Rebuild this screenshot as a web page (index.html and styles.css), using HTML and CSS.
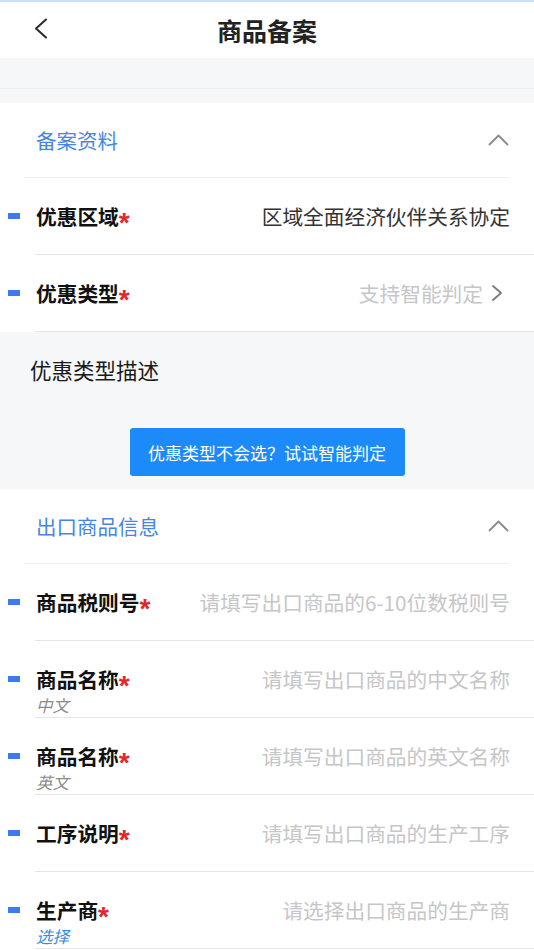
FILE: index.html
```html
<!DOCTYPE html>
<html lang="zh-CN">
<head>
    <meta charset="UTF-8">
    <meta name="viewport" content="width=device-width, initial-scale=1.0">
    <title>商品备案</title>
    <link rel="stylesheet" href="styles.css">
</head>
<body>
    <div class="topline"></div>
    <header class="nav">
        <svg class="back" width="14" height="22" viewBox="0 0 14 22">
            <polyline points="12,1.5 2,10.5 12,19.5" />
        </svg>
        <h1>商品备案</h1>
        <span></span>
    </header>
    <div class="gap">
        <div class="gap-top"></div>
    </div>

    <section class="card">
        <div class="card-head">
            <span>备案资料</span>
            <svg class="fold" width="22" height="12" viewBox="0 0 22 12">
                <polyline points="1.5,10.5 10.5,1.5 19.5,10.5" />
            </svg>
        </div>
        <div class="field">
            <i class="mark"></i>
            <div class="field-body">
                <div class="field-label">
                    <div class="name">优惠区域<b class="req">*</b></div>
                </div>
                <div class="field-value">区域全面经济伙伴关系协定</div>
            </div>
        </div>
        <div class="field">
            <i class="mark"></i>
            <div class="field-body">
                <div class="field-label">
                    <div class="name">优惠类型<b class="req">*</b></div>
                </div>
                <div class="field-value placeholder">支持智能判定</div>
                <svg class="arrow" width="10" height="24" viewBox="0 0 10 24">
                    <polyline points="1,5 9,12 1,19" />
                </svg>
            </div>
        </div>
    </section>

    <section class="desc">
        <div class="desc-title">优惠类型描述</div>
        <button type="button" class="smart-btn">优惠类型不会选？试试智能判定</button>
    </section>

    <section class="card">
        <div class="card-head">
            <span>出口商品信息</span>
            <svg class="fold" width="22" height="12" viewBox="0 0 22 12">
                <polyline points="1.5,10.5 10.5,1.5 19.5,10.5" />
            </svg>
        </div>
        <div class="field">
            <i class="mark"></i>
            <div class="field-body">
                <div class="field-label">
                    <div class="name">商品税则号<b class="req">*</b></div>
                </div>
                <div class="field-value placeholder">请填写出口商品的6-10位数税则号</div>
            </div>
        </div>
        <div class="field">
            <i class="mark"></i>
            <div class="field-body">
                <div class="field-label">
                    <div class="name">商品名称<b class="req">*</b></div>
                    <div class="sub">中文</div>
                </div>
                <div class="field-value placeholder">请填写出口商品的中文名称</div>
            </div>
        </div>
        <div class="field">
            <i class="mark"></i>
            <div class="field-body">
                <div class="field-label">
                    <div class="name">商品名称<b class="req">*</b></div>
                    <div class="sub">英文</div>
                </div>
                <div class="field-value placeholder">请填写出口商品的英文名称</div>
            </div>
        </div>
        <div class="field">
            <i class="mark"></i>
            <div class="field-body">
                <div class="field-label">
                    <div class="name">工序说明<b class="req">*</b></div>
                </div>
                <div class="field-value placeholder">请填写出口商品的生产工序</div>
            </div>
        </div>
        <div class="field">
            <i class="mark"></i>
            <div class="field-body">
                <div class="field-label">
                    <div class="name">生产商<b class="req">*</b></div>
                    <div class="sub link">选择</div>
                </div>
                <div class="field-value placeholder">请选择出口商品的生产商</div>
            </div>
        </div>
    </section>
</body>
</html>
```

FILE: styles.css
```css
body {
    margin: 0;
    width: 534px;
    height: 950px;
    overflow: hidden;
    background-color: #fff;
    font-family: "Noto Sans CJK SC", "Noto Sans", sans-serif;
    color: #1a1a1a;
}

.topline {
    height: 2px;
    background-color: #cbe0f3;
}

.nav {
    display: grid;
    grid-template-columns: 1fr auto 1fr;
    align-items: center;
    height: 56px;
    background-color: #fff;
}

.back {
    margin-left: 34px;
    margin-top: -2px;
}

.back polyline,
.fold polyline,
.arrow polyline {
    fill: none;
    stroke-linecap: round;
    stroke-linejoin: round;
}

.back polyline {
    stroke: #2a2a2a;
    stroke-width: 2;
}

.nav h1 {
    margin: 0;
    font-size: 25px;
    font-weight: 700;
    line-height: 56px;
    color: #222;
}

.gap {
    height: 45px;
    background-color: #f6f7f9;
}

.gap-top {
    height: 30px;
    border-bottom: 1px solid #eceef1;
}

.card {
    background-color: #fff;
}

.card-head {
    display: flex;
    align-items: center;
    justify-content: space-between;
    box-sizing: border-box;
    height: 75px;
    margin: 0 24px;
    padding-left: 12px;
    border-bottom: 1px solid #efeff1;
    font-size: 20.5px;
    color: #4686e2;
}

.card-head span {
    margin-top: -1px;
}

.fold polyline {
    stroke: #8a8a8a;
    stroke-width: 1.8;
}

.field {
    display: flex;
    align-items: flex-start;
}

.mark {
    flex: none;
    width: 12px;
    height: 6px;
    margin: 35px 15px 0 8px;
    background-color: #3b7bef;
}

.field-body {
    flex: 1;
    display: flex;
    align-items: flex-start;
    box-sizing: border-box;
    height: 77px;
    padding: 26px 24px 0 1px;
    border-bottom: 1px solid #e6e6e8;
}

.field-label {
    flex: none;
}

.name {
    font-size: 20.7px;
    font-weight: 700;
    line-height: 24px;
    color: #111;
}

.req {
    font-family: "Liberation Sans", sans-serif;
    font-size: 28px;
    font-weight: 700;
    color: #e3262b;
    vertical-align: -7px;
    line-height: 0;
}

.sub {
    margin-top: 5px;
    font-size: 16.5px;
    font-style: italic;
    line-height: 18px;
    color: #8c8c8c;
}

.sub.link {
    color: #3a8be0;
}

.field-value {
    flex: 1;
    text-align: right;
    font-size: 20.7px;
    line-height: 24px;
    color: #333;
    white-space: nowrap;
}

.placeholder {
    color: #c6c6c8;
}

.arrow {
    flex: none;
    margin: 0 8px 0 9px;
}

.arrow polyline {
    stroke: #7a7a7a;
    stroke-width: 1.8;
}

.desc {
    box-sizing: border-box;
    height: 157px;
    padding: 23px 0 0 30px;
    background-color: #f6f7f9;
    display: flex;
    flex-direction: column;
}

.desc-title {
    font-size: 21.5px;
    line-height: 30px;
    color: #1a1a1a;
}

.smart-btn {
    align-self: center;
    margin: 43px 0 0 -30px;
    width: 275px;
    height: 48px;
    padding: 0;
    border: none;
    border-radius: 3px;
    background-color: #1c8bf9;
    color: #fff;
    font-family: "Noto Sans CJK SC", "Noto Sans", sans-serif;
    font-size: 17px;
}
```
